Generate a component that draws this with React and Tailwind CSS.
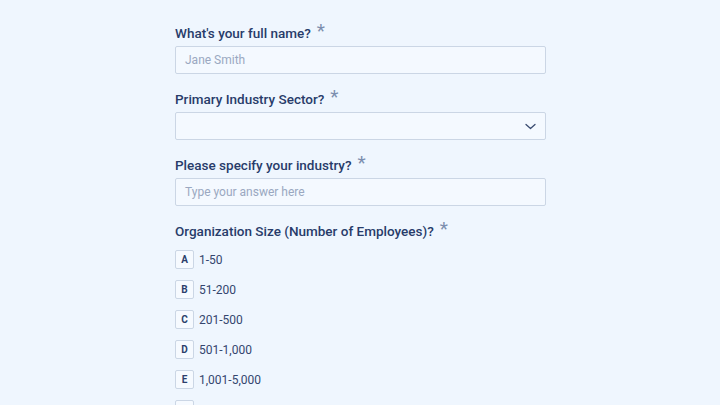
import React from "react";

const options = [
  { key: "A", label: "1-50" },
  { key: "B", label: "51-200" },
  { key: "C", label: "201-500" },
  { key: "D", label: "501-1,000" },
  { key: "E", label: "1,001-5,000" },
  { key: "F", label: "5,001-10,000" },
];

function Label({ children }) {
  return (
    <div className="flex h-[20px] items-center text-[13.5px] font-medium leading-[20px] text-[#283c6a]">
      <span>{children}</span>
      <span className="ml-[6px] -mt-[5px] text-[19px] font-normal leading-none text-[#7c8eae]">*</span>
    </div>
  );
}

function TextBox({ placeholder }) {
  return (
    <div className="mt-[3px] flex h-[28px] items-center rounded-[2px] border border-[#cbd6e5] bg-[#f4f9ff] px-[9px] text-[12px] text-[#9aa8c1]">
      {placeholder}
    </div>
  );
}

export default function App() {
  return (
    <div
      className="h-[405px] w-full overflow-hidden bg-[#eff6fe]"
      style={{ fontFamily: "Roboto, 'Liberation Sans', sans-serif" }}
    >
      <div className="w-[371px] pt-[23px]" style={{ marginLeft: 175 }}>
        <Label>What's your full name?</Label>
        <TextBox placeholder="Jane Smith" />

        <div className="mt-[15px]">
          <Label>Primary Industry Sector?</Label>
          <div className="mt-[3px] flex h-[28px] items-center justify-end rounded-[2px] border border-[#cbd6e5] bg-[#f4f9ff] pr-[9px]">
            <svg width="11" height="7" viewBox="0 0 11 7" fill="none">
              <path d="M1 1.5 5.5 5.5 10 1.5" stroke="#3a4b70" strokeWidth="1.3" strokeLinecap="round" strokeLinejoin="round" />
            </svg>
          </div>
        </div>

        <div className="mt-[15px]">
          <Label>Please specify your industry?</Label>
          <TextBox placeholder="Type your answer here" />
        </div>

        <div className="mt-[15px]">
          <Label>Organization Size (Number of Employees)?</Label>
          <div className="mt-[9px] flex flex-col gap-[11px]">
            {options.map((o) => (
              <div key={o.key} className="flex h-[19px] items-center">
                <div className="flex h-[19px] w-[19px] items-center justify-center rounded-[2px] border border-[#cbd6e5] bg-[#f6faff] text-[10px] font-bold text-[#2c3f6c]">
                  {o.key}
                </div>
                <span className="ml-[5px] text-[12px] text-[#34466e]">{o.label}</span>
              </div>
            ))}
          </div>
        </div>
      </div>
    </div>
  );
}
